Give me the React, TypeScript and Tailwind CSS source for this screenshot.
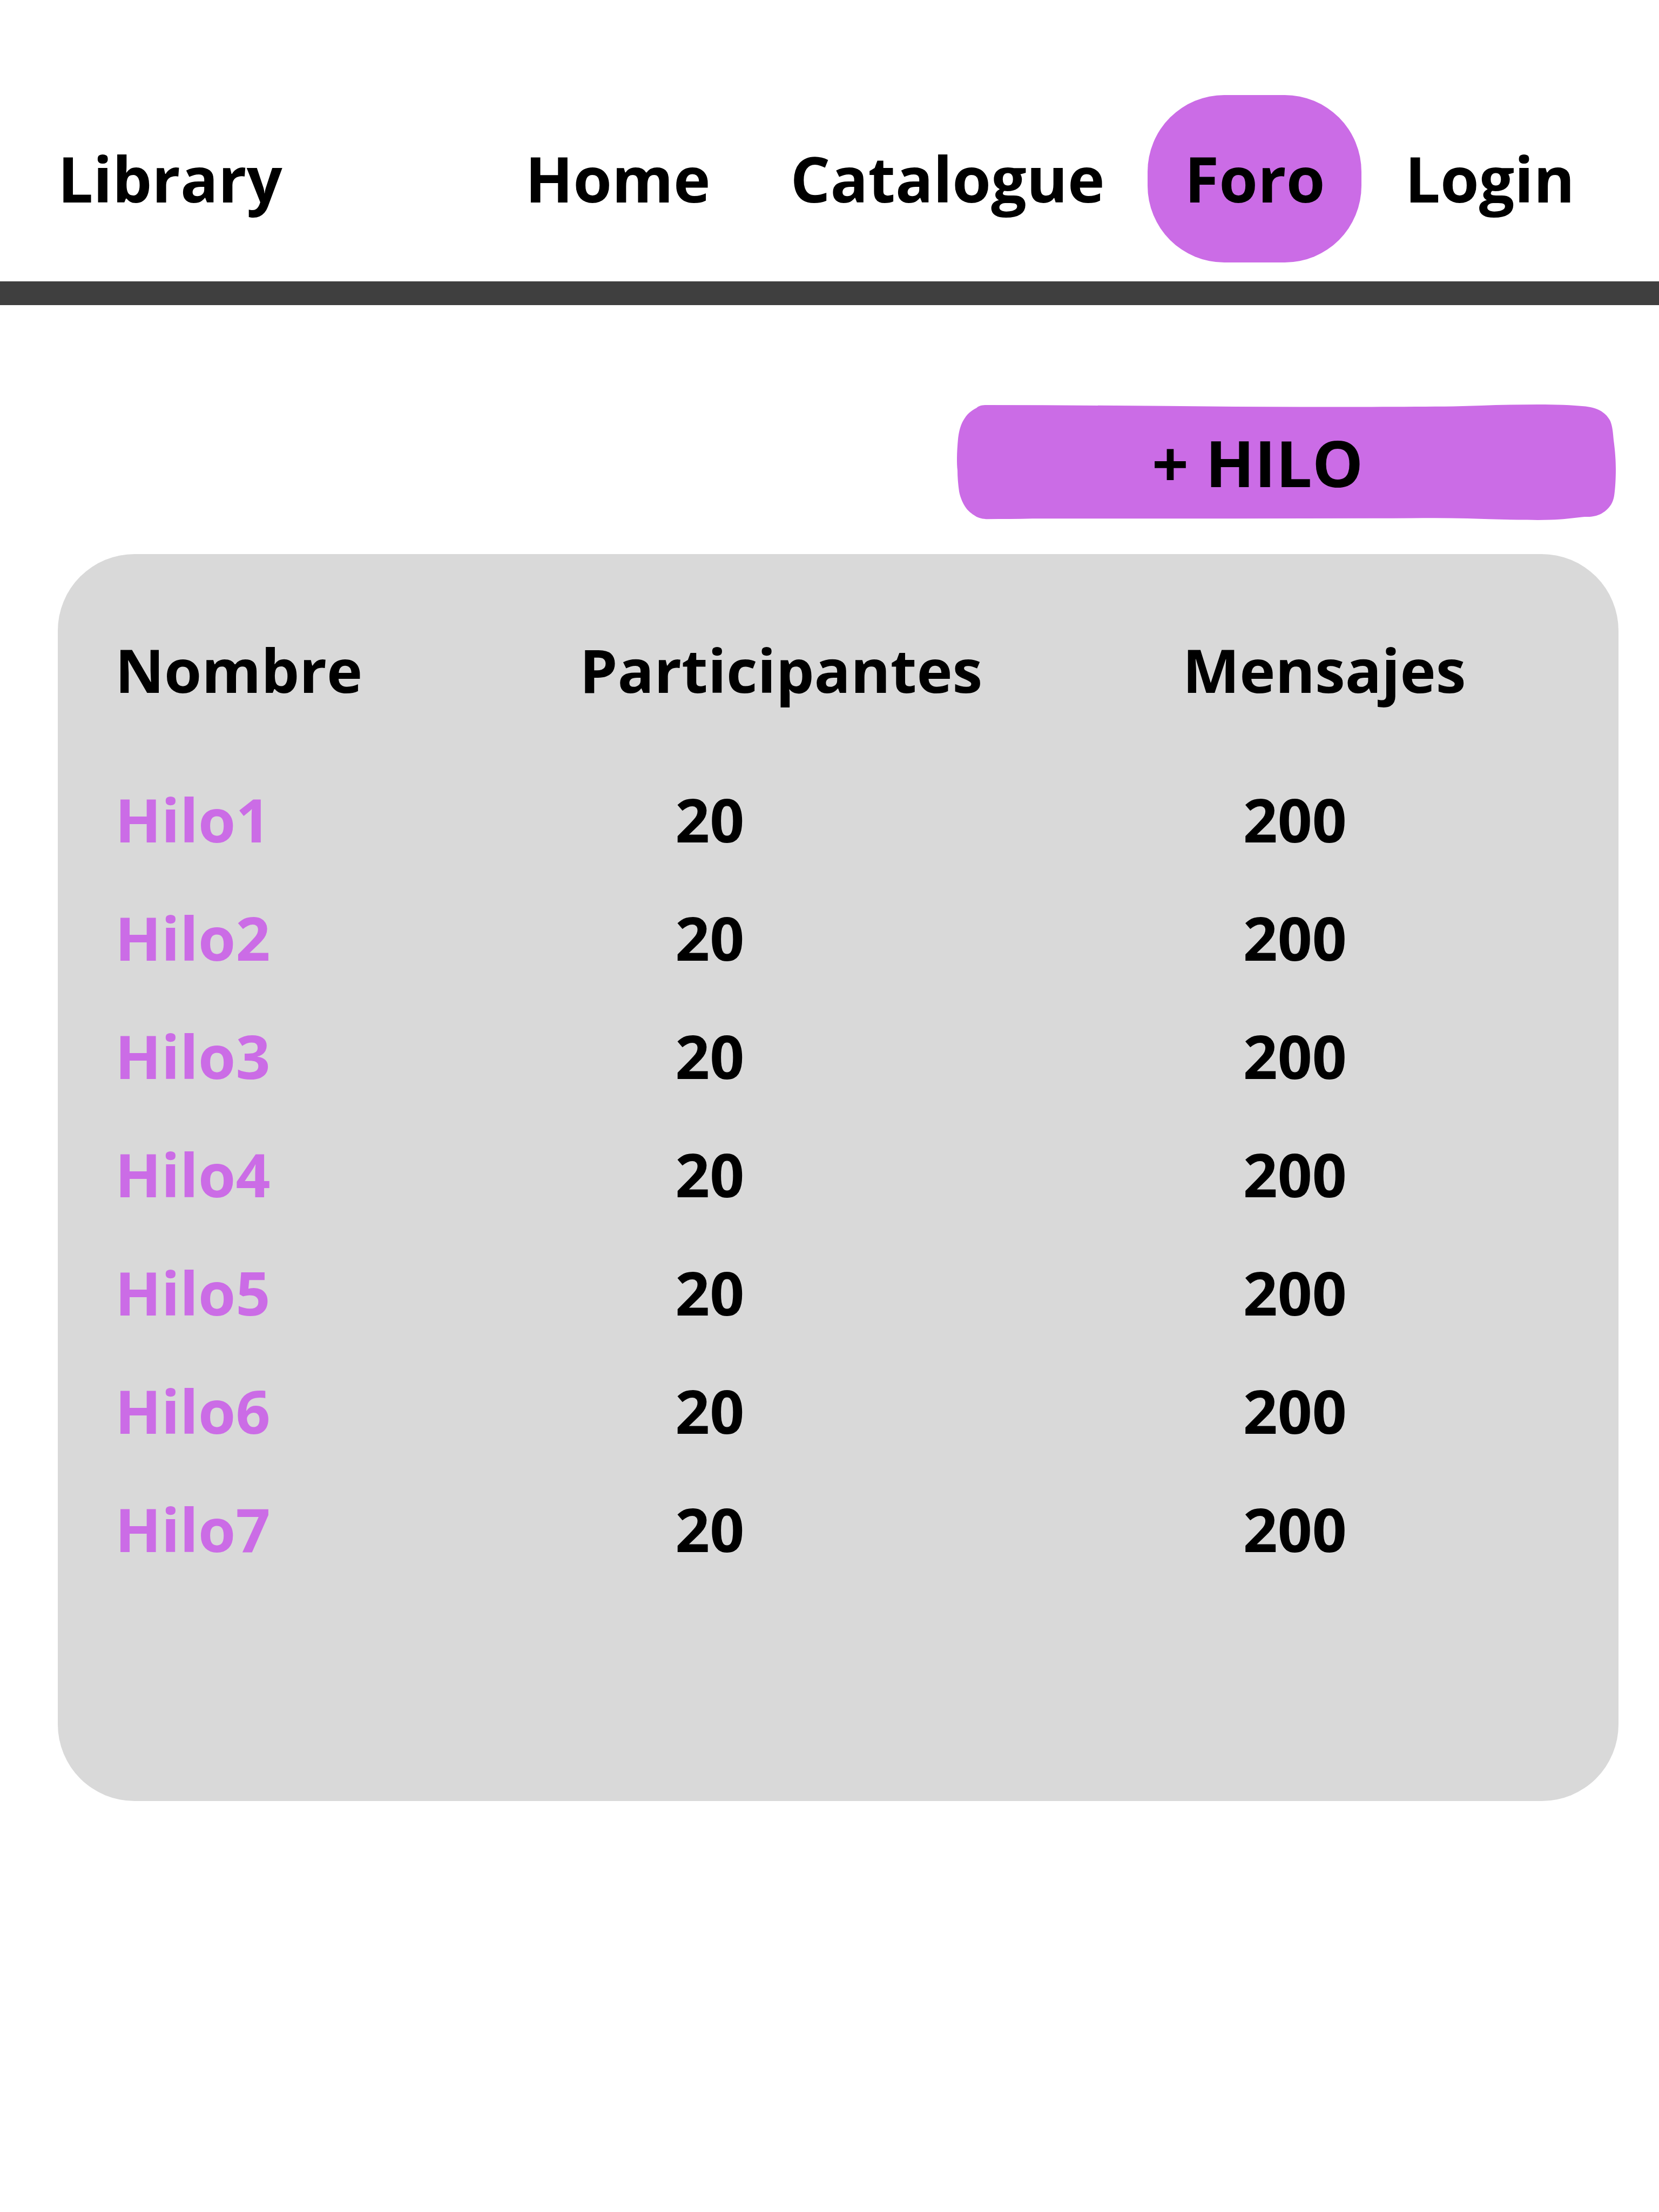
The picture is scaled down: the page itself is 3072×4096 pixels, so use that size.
const links = ["Home", "Catalogue", "Foro", "Login"];

const threads = [1, 2, 3, 4, 5, 6, 7].map((n) => ({
  name: `Hilo${n}`,
  participants: 20,
  messages: 200,
}));

function Header() {
  return (
    <header className="flex items-baseline justify-between border-b-[44px] border-[#3f3f3f] pt-[176px] pr-[88px] pb-[35px] pl-[107px] text-[116px] leading-[160px]">
      <a href="#library">Library</a>
      <nav className="flex items-baseline gap-3">
        {links.map((label) => (
          <a
            key={label}
            href={`#${label.toLowerCase()}`}
            aria-current={label === "Foro" ? "page" : undefined}
            className="rounded-[142px] px-[68px] pt-[74px] pb-[76px] aria-[current=page]:bg-[#cb6ce6]"
          >
            {label}
          </a>
        ))}
      </nav>
    </header>
  );
}

function NewThreadButton() {
  return (
    <button
      type="button"
      className="relative mr-[5px] h-[214px] w-[1220px] self-end pl-[361px] text-left text-[119px] leading-[160px]"
    >
      <svg
        aria-hidden="true"
        viewBox="0 0 1220 214"
        preserveAspectRatio="none"
        className="absolute inset-0 h-full w-full fill-[#cb6ce6]"
      >
        <path d="M0 100C0 88 1 75 2 64C4 46 8 35 14 26C20 16 28 11 36 6.500C40 3 43 2 47 1.500C50 1 54 1 57 1C250 1 444 4 637 4.500C731 4.500 842 4.500 919 3.600C971 2 1023 0 1076 0C1109 0 1139 1 1164 3.600C1184 6 1201 13 1210 31C1214 41 1215 54 1216 66C1219 88 1220 105 1220 120C1220 137 1219 155 1217 169C1215 181 1210 189 1202 196C1195 202 1187 206 1176 207.500C1170 208.500 1165 207.500 1157 208.500C1139 210.500 1122 213 1099 213.400C1085 214 1071 214 1056 213.600C1019 213.600 982 212 945 211C911 210 876 210 842 210.500C608 211.500 374 211 140 211.300C112 212 85 212 57 212.300C48 212 40 210.500 34 206.500C27 202 21 198 15 189C9 179 6 171 4 161C2 147 1 134 1 122C0 115 0 107 0 100Z" />
      </svg>
      <span className="relative">+ HILO</span>
    </button>
  );
}

function ThreadTable() {
  return (
    <section className="mt-[63px] rounded-[142px] bg-[#d9d9d9] pt-[46px] pb-[395px] pl-[106px]">
      <table className="w-full table-fixed text-[112px] leading-[160px]">
        <colgroup>
          <col className="w-[30.9%]" />
          <col className="w-[40.1%]" />
          <col />
        </colgroup>
        <thead>
          <tr className="h-[335px] text-left">
            <th className="p-0">Nombre</th>
            <th className="p-0">Participantes</th>
            <th className="p-0">Mensajes</th>
          </tr>
        </thead>
        <tbody>
          {threads.map((thread) => (
            <tr key={thread.name} className="h-[219px]">
              <td className="p-0 text-[#cb6ce6]">
                <a href={`#${thread.name.toLowerCase()}`}>{thread.name}</a>
              </td>
              <td className="p-0 pl-[177px]">{thread.participants}</td>
              <td className="p-0 pl-[112px]">{thread.messages}</td>
            </tr>
          ))}
        </tbody>
      </table>
    </section>
  );
}

export default function App() {
  return (
    <div className="min-h-screen bg-white font-['Open_Sans',sans-serif] font-bold text-black">
      <Header />
      <main className="flex flex-col pt-[184px] pr-[75px] pl-[107px]">
        <NewThreadButton />
        <ThreadTable />
      </main>
    </div>
  );
}
